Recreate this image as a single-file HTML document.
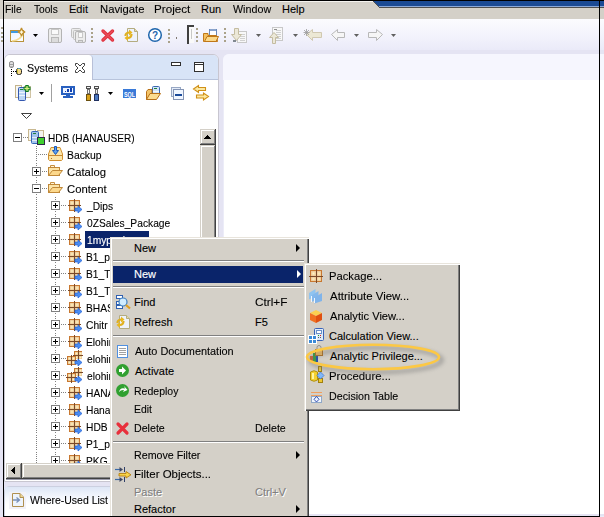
<!DOCTYPE html>
<html><head><meta charset="utf-8"><style>
html,body{margin:0;padding:0;width:604px;height:517px;overflow:hidden;position:relative;background:#e5e4f3;font-family:'Liberation Sans', sans-serif}
</style></head><body>
<div style="position:absolute;left:0px;top:0px;width:604px;height:19px;background:#d4d0c8"></div>
<div style="position:absolute;left:4px;top:1px;width:595px;height:1px;background:#f4f2ee"></div>
<svg style="position:absolute;left:0;top:0" width="604" height="9" shape-rendering="crispEdges"><polygon points="371,0 604,0 604,8 379,8" fill="#505050"/><polygon points="372,0 604,0 604,7 379,7" fill="#8aa8d8"/><polygon points="372,0 604,0 604,6 378,6" fill="#1a4a94"/></svg>
<div style="position:absolute;left:0px;top:19px;width:604px;height:31px;background:linear-gradient(#fbfbfe,#f3f3fc 55%,#eaeaf8)"></div>
<div style="position:absolute;left:0px;top:50px;width:604px;height:467px;background:#e5e4f3"></div>
<svg style="position:absolute;left:0;top:0" width="604" height="517" shape-rendering="crispEdges"><rect x="1" y="27" width="2" height="2" fill="#a8a48e" /><rect x="1" y="32" width="2" height="2" fill="#a8a48e" /><rect x="1" y="36" width="2" height="2" fill="#a8a48e" /><rect x="1" y="40" width="2" height="2" fill="#a8a48e" /></svg>
<div style="position:absolute;left:5.06px;top:-1px;font:11px/20px 'Liberation Sans', sans-serif;white-space:pre;color:#000;-webkit-text-stroke:0.1px #000;transform:scaleX(0.9375);transform-origin:0 0;">File</div>
<div style="position:absolute;left:34.00px;top:-1px;font:11px/20px 'Liberation Sans', sans-serif;white-space:pre;color:#000;-webkit-text-stroke:0.1px #000;transform:scaleX(0.9231);transform-origin:0 0;">Tools</div>
<div style="position:absolute;left:69.00px;top:-1px;font:11px/20px 'Liberation Sans', sans-serif;white-space:pre;color:#000;-webkit-text-stroke:0.1px #000;">Edit</div>
<div style="position:absolute;left:99.98px;top:-1px;font:11px/20px 'Liberation Sans', sans-serif;white-space:pre;color:#000;-webkit-text-stroke:0.1px #000;transform:scaleX(1.0238);transform-origin:0 0;">Navigate</div>
<div style="position:absolute;left:153.94px;top:-1px;font:11px/20px 'Liberation Sans', sans-serif;white-space:pre;color:#000;-webkit-text-stroke:0.1px #000;transform:scaleX(1.0606);transform-origin:0 0;">Project</div>
<div style="position:absolute;left:201.00px;top:-1px;font:11px/20px 'Liberation Sans', sans-serif;white-space:pre;color:#000;-webkit-text-stroke:0.1px #000;">Run</div>
<div style="position:absolute;left:233.00px;top:-1px;font:11px/20px 'Liberation Sans', sans-serif;white-space:pre;color:#000;-webkit-text-stroke:0.1px #000;transform:scaleX(0.9744);transform-origin:0 0;">Window</div>
<div style="position:absolute;left:282.00px;top:-1px;font:11px/20px 'Liberation Sans', sans-serif;white-space:pre;color:#000;-webkit-text-stroke:0.1px #000;">Help</div>
<svg style="position:absolute;left:0;top:0" width="604" height="517"><defs><linearGradient id="gwin" x1="0" y1="0" x2="1" y2="1"><stop offset="0" stop-color="#e8f4ff"/><stop offset="1" stop-color="#ffffff"/></linearGradient></defs><rect x="10.5" y="30.5" width="13" height="11" fill="url(#gwin)" stroke="#b8923a"/><rect x="11" y="31" width="10" height="2" fill="#3d9ae0" /><path d="M12 41 Q21 40 22.5 34" stroke="#f4dc90" stroke-width="1.6" fill="none"/><path d="M21.5 27.8 Q22 31.3 25.2 32 Q22 32.7 21.5 36.2 Q21 32.7 17.8 32 Q21 31.3 21.5 27.8 Z" fill="#fffbe0" stroke="#c09030" stroke-width="1.2"/><polygon points="33,34 38,34 35.5,37" fill="#000"/><rect x="48.5" y="28.5" width="13" height="14" rx="1.5" fill="#ececec" stroke="#b4b4b4"/><rect x="51.5" y="29.5" width="7" height="5" fill="#fafafa" stroke="#c8c8c8"/><rect x="51.5" y="37.5" width="7" height="5" fill="#dcdcdc" stroke="#b8b8b8"/><rect x="71.5" y="28.5" width="9" height="9" rx="1" fill="#ececec" stroke="#c0c0c0"/><rect x="73.5" y="30.5" width="9" height="9" rx="1" fill="#ececec" stroke="#c0c0c0"/><rect x="75.5" y="31.5" width="10" height="11" rx="1.5" fill="#ececec" stroke="#b4b4b4"/><rect x="78.5" y="32.5" width="4" height="5" fill="#fafafa" stroke="#c8c8c8"/><rect x="78.5" y="40.5" width="4" height="2" fill="#dcdcdc" stroke="#b8b8b8"/><rect x="91" y="28" width="2" height="2" fill="#aaa28a" /><rect x="91" y="32" width="2" height="2" fill="#aaa28a" /><rect x="91" y="36" width="2" height="2" fill="#aaa28a" /><rect x="91" y="40" width="2" height="2" fill="#aaa28a" /><path d="M103 31 L112.5 40 M112.5 31 L103 40" stroke="#e0303c" stroke-width="3.4" stroke-linecap="round"/><path d="M103 31 L112.5 40 M112.5 31 L103 40" stroke="#f06070" stroke-width="1.2" stroke-linecap="round" opacity=".6"/><path d="M127.5 28.5 H134.5 L137.5 31.5 V41.5 H127.5 Z" fill="#edf2fc" stroke="#b4ac80"/><path d="M134.5 28.5 V31.5 H137.5" fill="#e8dca8" stroke="#b4ac80"/><path d="M125.5 36 Q125.5 32.5 129.5 32.5" stroke="#e0b020" stroke-width="2.2" fill="none"/><path d="M129 29.5 L132.5 32.5 L129 35.5 Z" fill="#e8b820"/><path d="M131.5 34 Q131.5 38 127.5 38" stroke="#e0b020" stroke-width="2.2" fill="none"/><path d="M128 35 L124.5 38 L128 41 Z" fill="#e8b820"/><circle cx="155" cy="35" r="6.3" fill="#fff" stroke="#1f66ad" stroke-width="1.5"/><text x="155" y="39" font-family="Liberation Sans" font-weight="bold" font-size="10" text-anchor="middle" fill="#1f66ad">?</text><rect x="168" y="29" width="2" height="2" fill="#aaa28a" /><rect x="168" y="33" width="2" height="2" fill="#aaa28a" /><rect x="168" y="37" width="2" height="2" fill="#aaa28a" /><rect x="168" y="41" width="2" height="2" fill="#aaa28a" /><rect x="176" y="37" width="1" height="2" fill="#807870" /><rect x="187" y="25" width="2" height="19" fill="#404040" /><rect x="187" y="25" width="7" height="2" fill="#404040" /><rect x="189" y="27" width="5" height="16" fill="#fafafa" /><rect x="191" y="29" width="1" height="10" fill="#c8c8c8" /><rect x="196" y="28" width="2" height="2" fill="#aaa28a" /><rect x="196" y="32" width="2" height="2" fill="#aaa28a" /><rect x="196" y="36" width="2" height="2" fill="#aaa28a" /><rect x="196" y="40" width="2" height="2" fill="#aaa28a" /><rect x="209.5" y="29.5" width="7" height="7" fill="#fff" stroke="#6b8ab8"/><rect x="210" y="29" width="6" height="2" fill="#8aa4cc" /><path d="M203.5 33.5 H208 V35.5 H216.5 L217.5 41.5 H203.5 Z" fill="#f4c060" stroke="#c07818"/><path d="M204.5 41.5 L207 36.5 H218.5 L216 41.5 Z" fill="#fbd98a" stroke="#c07818"/><rect x="224" y="28" width="2" height="2" fill="#aaa28a" /><rect x="224" y="32" width="2" height="2" fill="#aaa28a" /><rect x="224" y="36" width="2" height="2" fill="#aaa28a" /><rect x="224" y="40" width="2" height="2" fill="#aaa28a" /><rect x="237.5" y="31.5" width="9" height="11" fill="#f8f8f8" stroke="#c8c8c8"/><rect x="240" y="34" width="5" height="1" fill="#d0d0d0" /><rect x="240" y="36" width="5" height="1" fill="#d0d0d0" /><rect x="240" y="38" width="5" height="1" fill="#d0d0d0" /><rect x="240" y="40" width="5" height="1" fill="#d0d0d0" /><path d="M234.5 28.5 H238.5 V34.5 H241.5 L236.5 40.5 L231.5 34.5 H234.5 Z" fill="#ece8d8" stroke="#c4bca0"/><rect x="233" y="40" width="3" height="2" fill="#808890" /><polygon points="256,34 261,34 258.5,37" fill="#606060"/><rect x="272.5" y="27.5" width="10" height="13" fill="#f8f8f8" stroke="#c8c8c8"/><rect x="276" y="30" width="5" height="1" fill="#d0d0d0" /><rect x="276" y="32" width="5" height="1" fill="#d0d0d0" /><rect x="276" y="34" width="5" height="1" fill="#d0d0d0" /><rect x="276" y="36" width="5" height="1" fill="#d0d0d0" /><rect x="276" y="38" width="5" height="1" fill="#d0d0d0" /><rect x="274" y="29" width="3" height="1" fill="#909090" /><path d="M272.5 43.5 V37.5 H269.5 L274 32.5 L278.5 37.5 H275.5 V43.5 Z" fill="#ece8d8" stroke="#c4bca0"/><polygon points="293,34 298,34 295.5,37" fill="#606060"/><path d="M306.5 34.5 L312.5 29.5 V32.5 H321.5 V37.5 H312.5 V40.5 Z" fill="#ece8d4" stroke="#d0c8b0"/><path d="M304 30 L309 35 M309 30 L304 35 M306.5 29 V36 M303.5 32.5 H309.5" stroke="#9a9a9a" stroke-width=".8"/><path d="M331.5 34.5 L337.5 29.5 V32.5 H344.5 V37.5 H337.5 V40.5 Z" fill="#f6f6f6" stroke="#b8b8b8"/><polygon points="354,34 359,34 356.5,37" fill="#606060"/><path d="M382.5 34.5 L376.5 29.5 V32.5 H368.5 V37.5 H376.5 V40.5 Z" fill="#f6f6f6" stroke="#b8b8b8"/><polygon points="391,34 396,34 393.5,37" fill="#606060"/></svg>
<div style="position:absolute;left:4px;top:54px;width:215px;height:428px;background:#fff;border:1px solid #c8c6d0;border-radius:6px 6px 0 0;box-sizing:border-box"></div>
<div style="position:absolute;left:5px;top:55px;width:213px;height:24px;background:#d8e4f7;border-radius:5px 5px 0 0"></div>
<div style="position:absolute;left:5px;top:79px;width:213px;height:1px;background:#b8c4dc"></div>
<div style="position:absolute;left:5px;top:55px;width:88px;height:25px;background:#fff;border-right:1px solid #b8c0d8;border-radius:5px 4px 0 0;box-sizing:border-box"></div>
<div style="position:absolute;left:27.02px;top:58px;font:11px/20px 'Liberation Sans', sans-serif;white-space:pre;color:#000;-webkit-text-stroke:0.1px #000;transform:scaleX(0.9756);transform-origin:0 0;">Systems</div>
<svg style="position:absolute;left:0;top:0" width="604" height="517"><rect x="9.5" y="61.5" width="4" height="6" rx="1.5" fill="#e0e0e0" stroke="#909090"/><rect x="10" y="64" width="3" height="1" fill="#a0a0a0" /><rect x="10" y="66" width="3" height="1" fill="#b0b0b0" /><rect x="11" y="69" width="1" height="1" fill="#000" /><rect x="11" y="71" width="1" height="1" fill="#000" /><rect x="11" y="73" width="1" height="1" fill="#000" /><rect x="11" y="75" width="1" height="1" fill="#000" /><rect x="13" y="71" width="1" height="1" fill="#000" /><rect x="15" y="71" width="1" height="1" fill="#000" /><rect x="16.5" y="68.5" width="5" height="6" rx="2" fill="#f8dc90" stroke="#202020"/><rect x="17" y="69" width="1" height="4" fill="#c8c030" /><rect x="18" y="68" width="3" height="1" fill="#50a0b0" /><path d="M75.5 63.5 L77.5 63.5 L80 66 L82.5 63.5 L84.5 63.5 L84.5 65.5 L82 68 L84.5 70.5 L84.5 72.5 L82.5 72.5 L80 70 L77.5 72.5 L75.5 72.5 L75.5 70.5 L78 68 L75.5 65.5 Z" fill="#fff" stroke="#404040"/><rect x="171.5" y="62.5" width="9" height="3" fill="#fff" stroke="#303030"/><rect x="194.5" y="62.5" width="9" height="9" fill="#fff" stroke="#303030"/><rect x="195" y="64" width="9" height="1" fill="#303030" /><rect x="15.5" y="85.5" width="6" height="12" fill="#f6f6f2" stroke="#c4b48c"/><rect x="24.5" y="86.5" width="6" height="11" fill="#f6f6f2" stroke="#d0c4a4"/><rect x="18.5" y="87.5" width="7" height="13" rx="1" fill="#bcd6f6" stroke="#3458b0"/><rect x="20" y="89" width="3" height="1" fill="#208040" /><rect x="19" y="92" width="6" height="1" fill="#eef4fc" /><rect x="19" y="95" width="6" height="1" fill="#eef4fc" /><path d="M23.5 88.5 H30.5 M27 85 V92" stroke="#0a7a20" stroke-width="3.4"/><path d="M24.5 88.5 H29.5 M27 86 V91" stroke="#d8f080" stroke-width="1.3"/><polygon points="39,92 44,92 41.5,95" fill="#000"/><rect x="51" y="84" width="1" height="18" fill="#a0a0a0" /><rect x="62" y="87" width="12" height="7" fill="#eef4ff" stroke="#2860c0" stroke-width="2"/><rect x="65" y="91" width="1" height="1" fill="#1040b0" /><rect x="67" y="89" width="2" height="3" fill="#1040b0" /><rect x="70" y="88" width="2" height="4" fill="#1040b0" /><rect x="66" y="95" width="4" height="1" fill="#2860c0" /><rect x="63" y="96" width="10" height="2" fill="#2860c0" /><rect x="86.5" y="86.5" width="4" height="2" fill="#f0f0f0" stroke="#505050"/><rect x="87.5" y="89.5" width="2" height="4" fill="#f4f4f4" stroke="#707070"/><rect x="86.5" y="94.5" width="4" height="6" fill="#d8a018" stroke="#6a5010"/><rect x="94.5" y="86.5" width="4" height="2" fill="#f0f0f0" stroke="#505050"/><rect x="95.5" y="89.5" width="2" height="4" fill="#f4f4f4" stroke="#707070"/><rect x="94.5" y="94.5" width="4" height="6" fill="#4a78c0" stroke="#203060"/><polygon points="108,92 113,92 110.5,95" fill="#000"/><rect x="123" y="89" width="13" height="9" fill="#3a7ad8" /><text x="129.5" y="96.5" font-family="Liberation Sans" font-weight="bold" font-size="7.5" text-anchor="middle" fill="#fff" textLength="11" lengthAdjust="spacingAndGlyphs">SQL</text><rect x="152.5" y="86.5" width="7" height="8" rx="1" fill="#d0e4f8" stroke="#3a68b0"/><rect x="154" y="88" width="3" height="1" fill="#208040" /><rect x="153" y="91" width="6" height="1" fill="#f4f8fc" /><path d="M146.5 91.5 L148 89.5 H152 V99.5 H146.5 Z" fill="#f4c468" stroke="#b87018"/><path d="M146.5 99.5 L150 93.5 H160.5 L156.5 99.5 Z" fill="#fcdc90" stroke="#b87018"/><rect x="171.5" y="87.5" width="9" height="9" fill="#e4ecf8" stroke="#98a8c4"/><rect x="173.5" y="89.5" width="10" height="10" fill="#f0f6ff" stroke="#8494b4"/><rect x="175" y="94" width="7" height="2" fill="#1a4a9a" /><path d="M193.5 89 L198.5 85.5 V87.5 H205.5 V90.5 H198.5 V92.5 Z" fill="#fce8a0" stroke="#d09018" stroke-width="1.1"/><path d="M208.5 96.5 L203.5 93 V95 H196.5 V98 H203.5 V100 Z" fill="#fce8a0" stroke="#d09018" stroke-width="1.1"/><path d="M21.5 113.5 H31.5 L26.5 118.5 Z" fill="#fff" stroke="#404040"/></svg>
<div style="position:absolute;left:223px;top:54px;width:381px;height:463px;background:#fff;border:1px solid #ececf8;border-right:0;border-radius:6px 0 0 0;box-sizing:border-box"></div>
<div style="position:absolute;left:223px;top:54px;width:381px;height:26px;background:#f6f6fe;border-radius:6px 0 0 0"></div>
<div style="position:absolute;left:224px;top:514px;width:380px;height:2px;background:#e5e4f3"></div>
<div style="position:absolute;left:4px;top:486px;width:215px;height:31px;background:#fff;border:1px solid #ccd0e0;border-radius:6px 6px 0 0;box-sizing:border-box"></div>
<div style="position:absolute;left:5px;top:487px;width:213px;height:29px;background:linear-gradient(#dde6f6,#f4f7fd 35%,#fff 60%)"></div>
<div style="position:absolute;left:30.00px;top:490px;font:11px/20px 'Liberation Sans', sans-serif;white-space:pre;color:#000;-webkit-text-stroke:0.1px #000;transform:scaleX(0.9512);transform-origin:0 0;">Where-Used List</div>
<svg style="position:absolute;left:0;top:0" width="604" height="517"><rect x="9" y="492" width="17" height="17" fill="#f2f2f8"/><path d="M12.5 493.5 H20 L23.5 497 V506.5 H12.5 Z" fill="#eef4fc" stroke="#b09050"/><path d="M20 493.5 V497.5 H23.5" fill="#f0d890" stroke="#b09050"/><path d="M13 500 H19 M16.5 497.5 L19.5 500 L16.5 502.5" stroke="#7890b8" stroke-width="1.3" fill="none"/></svg>
<svg style="position:absolute;left:0;top:0" width="604" height="517"><defs><radialGradient id="cell"><stop offset="0" stop-color="#fff4c0"/><stop offset="1" stop-color="#ecc898"/></radialGradient></defs><rect x="36" y="146" width="1" height="1" fill="#808080" /><rect x="36" y="148" width="1" height="1" fill="#808080" /><rect x="36" y="150" width="1" height="1" fill="#808080" /><rect x="36" y="152" width="1" height="1" fill="#808080" /><rect x="36" y="154" width="1" height="1" fill="#808080" /><rect x="36" y="156" width="1" height="1" fill="#808080" /><rect x="36" y="158" width="1" height="1" fill="#808080" /><rect x="36" y="160" width="1" height="1" fill="#808080" /><rect x="36" y="163" width="1" height="1" fill="#808080" /><rect x="36" y="165" width="1" height="1" fill="#808080" /><rect x="36" y="167" width="1" height="1" fill="#808080" /><rect x="36" y="169" width="1" height="1" fill="#808080" /><rect x="36" y="171" width="1" height="1" fill="#808080" /><rect x="36" y="173" width="1" height="1" fill="#808080" /><rect x="36" y="175" width="1" height="1" fill="#808080" /><rect x="36" y="177" width="1" height="1" fill="#808080" /><rect x="36" y="180" width="1" height="1" fill="#808080" /><rect x="36" y="182" width="1" height="1" fill="#808080" /><rect x="36" y="184" width="1" height="1" fill="#808080" /><rect x="36" y="186" width="1" height="1" fill="#808080" /><rect x="36" y="188" width="1" height="1" fill="#808080" /><rect x="36" y="190" width="1" height="1" fill="#808080" /><rect x="36" y="192" width="1" height="1" fill="#808080" /><rect x="36" y="194" width="1" height="1" fill="#808080" /><rect x="36" y="197" width="1" height="1" fill="#808080" /><rect x="55" y="197" width="1" height="1" fill="#808080" /><rect x="36" y="199" width="1" height="1" fill="#808080" /><rect x="55" y="199" width="1" height="1" fill="#808080" /><rect x="36" y="201" width="1" height="1" fill="#808080" /><rect x="55" y="201" width="1" height="1" fill="#808080" /><rect x="36" y="203" width="1" height="1" fill="#808080" /><rect x="55" y="203" width="1" height="1" fill="#808080" /><rect x="36" y="205" width="1" height="1" fill="#808080" /><rect x="55" y="205" width="1" height="1" fill="#808080" /><rect x="36" y="207" width="1" height="1" fill="#808080" /><rect x="55" y="207" width="1" height="1" fill="#808080" /><rect x="36" y="209" width="1" height="1" fill="#808080" /><rect x="55" y="209" width="1" height="1" fill="#808080" /><rect x="36" y="211" width="1" height="1" fill="#808080" /><rect x="55" y="211" width="1" height="1" fill="#808080" /><rect x="36" y="214" width="1" height="1" fill="#808080" /><rect x="55" y="214" width="1" height="1" fill="#808080" /><rect x="36" y="216" width="1" height="1" fill="#808080" /><rect x="55" y="216" width="1" height="1" fill="#808080" /><rect x="36" y="218" width="1" height="1" fill="#808080" /><rect x="55" y="218" width="1" height="1" fill="#808080" /><rect x="36" y="220" width="1" height="1" fill="#808080" /><rect x="55" y="220" width="1" height="1" fill="#808080" /><rect x="36" y="222" width="1" height="1" fill="#808080" /><rect x="55" y="222" width="1" height="1" fill="#808080" /><rect x="36" y="224" width="1" height="1" fill="#808080" /><rect x="55" y="224" width="1" height="1" fill="#808080" /><rect x="36" y="226" width="1" height="1" fill="#808080" /><rect x="55" y="226" width="1" height="1" fill="#808080" /><rect x="36" y="228" width="1" height="1" fill="#808080" /><rect x="55" y="228" width="1" height="1" fill="#808080" /><rect x="36" y="231" width="1" height="1" fill="#808080" /><rect x="55" y="231" width="1" height="1" fill="#808080" /><rect x="36" y="233" width="1" height="1" fill="#808080" /><rect x="55" y="233" width="1" height="1" fill="#808080" /><rect x="36" y="235" width="1" height="1" fill="#808080" /><rect x="55" y="235" width="1" height="1" fill="#808080" /><rect x="36" y="237" width="1" height="1" fill="#808080" /><rect x="55" y="237" width="1" height="1" fill="#808080" /><rect x="36" y="239" width="1" height="1" fill="#808080" /><rect x="55" y="239" width="1" height="1" fill="#808080" /><rect x="36" y="241" width="1" height="1" fill="#808080" /><rect x="55" y="241" width="1" height="1" fill="#808080" /><rect x="36" y="243" width="1" height="1" fill="#808080" /><rect x="55" y="243" width="1" height="1" fill="#808080" /><rect x="36" y="245" width="1" height="1" fill="#808080" /><rect x="55" y="245" width="1" height="1" fill="#808080" /><rect x="36" y="248" width="1" height="1" fill="#808080" /><rect x="55" y="248" width="1" height="1" fill="#808080" /><rect x="36" y="250" width="1" height="1" fill="#808080" /><rect x="55" y="250" width="1" height="1" fill="#808080" /><rect x="36" y="252" width="1" height="1" fill="#808080" /><rect x="55" y="252" width="1" height="1" fill="#808080" /><rect x="36" y="254" width="1" height="1" fill="#808080" /><rect x="55" y="254" width="1" height="1" fill="#808080" /><rect x="36" y="256" width="1" height="1" fill="#808080" /><rect x="55" y="256" width="1" height="1" fill="#808080" /><rect x="36" y="258" width="1" height="1" fill="#808080" /><rect x="55" y="258" width="1" height="1" fill="#808080" /><rect x="36" y="260" width="1" height="1" fill="#808080" /><rect x="55" y="260" width="1" height="1" fill="#808080" /><rect x="36" y="262" width="1" height="1" fill="#808080" /><rect x="55" y="262" width="1" height="1" fill="#808080" /><rect x="36" y="265" width="1" height="1" fill="#808080" /><rect x="55" y="265" width="1" height="1" fill="#808080" /><rect x="36" y="267" width="1" height="1" fill="#808080" /><rect x="55" y="267" width="1" height="1" fill="#808080" /><rect x="36" y="269" width="1" height="1" fill="#808080" /><rect x="55" y="269" width="1" height="1" fill="#808080" /><rect x="36" y="271" width="1" height="1" fill="#808080" /><rect x="55" y="271" width="1" height="1" fill="#808080" /><rect x="36" y="273" width="1" height="1" fill="#808080" /><rect x="55" y="273" width="1" height="1" fill="#808080" /><rect x="36" y="275" width="1" height="1" fill="#808080" /><rect x="55" y="275" width="1" height="1" fill="#808080" /><rect x="36" y="277" width="1" height="1" fill="#808080" /><rect x="55" y="277" width="1" height="1" fill="#808080" /><rect x="36" y="279" width="1" height="1" fill="#808080" /><rect x="55" y="279" width="1" height="1" fill="#808080" /><rect x="36" y="282" width="1" height="1" fill="#808080" /><rect x="55" y="282" width="1" height="1" fill="#808080" /><rect x="36" y="284" width="1" height="1" fill="#808080" /><rect x="55" y="284" width="1" height="1" fill="#808080" /><rect x="36" y="286" width="1" height="1" fill="#808080" /><rect x="55" y="286" width="1" height="1" fill="#808080" /><rect x="36" y="288" width="1" height="1" fill="#808080" /><rect x="55" y="288" width="1" height="1" fill="#808080" /><rect x="36" y="290" width="1" height="1" fill="#808080" /><rect x="55" y="290" width="1" height="1" fill="#808080" /><rect x="36" y="292" width="1" height="1" fill="#808080" /><rect x="55" y="292" width="1" height="1" fill="#808080" /><rect x="36" y="294" width="1" height="1" fill="#808080" /><rect x="55" y="294" width="1" height="1" fill="#808080" /><rect x="36" y="296" width="1" height="1" fill="#808080" /><rect x="55" y="296" width="1" height="1" fill="#808080" /><rect x="36" y="299" width="1" height="1" fill="#808080" /><rect x="55" y="299" width="1" height="1" fill="#808080" /><rect x="36" y="301" width="1" height="1" fill="#808080" /><rect x="55" y="301" width="1" height="1" fill="#808080" /><rect x="36" y="303" width="1" height="1" fill="#808080" /><rect x="55" y="303" width="1" height="1" fill="#808080" /><rect x="36" y="305" width="1" height="1" fill="#808080" /><rect x="55" y="305" width="1" height="1" fill="#808080" /><rect x="36" y="307" width="1" height="1" fill="#808080" /><rect x="55" y="307" width="1" height="1" fill="#808080" /><rect x="36" y="309" width="1" height="1" fill="#808080" /><rect x="55" y="309" width="1" height="1" fill="#808080" /><rect x="36" y="311" width="1" height="1" fill="#808080" /><rect x="55" y="311" width="1" height="1" fill="#808080" /><rect x="36" y="313" width="1" height="1" fill="#808080" /><rect x="55" y="313" width="1" height="1" fill="#808080" /><rect x="36" y="316" width="1" height="1" fill="#808080" /><rect x="55" y="316" width="1" height="1" fill="#808080" /><rect x="36" y="318" width="1" height="1" fill="#808080" /><rect x="55" y="318" width="1" height="1" fill="#808080" /><rect x="36" y="320" width="1" height="1" fill="#808080" /><rect x="55" y="320" width="1" height="1" fill="#808080" /><rect x="36" y="322" width="1" height="1" fill="#808080" /><rect x="55" y="322" width="1" height="1" fill="#808080" /><rect x="36" y="324" width="1" height="1" fill="#808080" /><rect x="55" y="324" width="1" height="1" fill="#808080" /><rect x="36" y="326" width="1" height="1" fill="#808080" /><rect x="55" y="326" width="1" height="1" fill="#808080" /><rect x="36" y="328" width="1" height="1" fill="#808080" /><rect x="55" y="328" width="1" height="1" fill="#808080" /><rect x="36" y="330" width="1" height="1" fill="#808080" /><rect x="55" y="330" width="1" height="1" fill="#808080" /><rect x="36" y="333" width="1" height="1" fill="#808080" /><rect x="55" y="333" width="1" height="1" fill="#808080" /><rect x="36" y="335" width="1" height="1" fill="#808080" /><rect x="55" y="335" width="1" height="1" fill="#808080" /><rect x="36" y="337" width="1" height="1" fill="#808080" /><rect x="55" y="337" width="1" height="1" fill="#808080" /><rect x="36" y="339" width="1" height="1" fill="#808080" /><rect x="55" y="339" width="1" height="1" fill="#808080" /><rect x="36" y="341" width="1" height="1" fill="#808080" /><rect x="55" y="341" width="1" height="1" fill="#808080" /><rect x="36" y="343" width="1" height="1" fill="#808080" /><rect x="55" y="343" width="1" height="1" fill="#808080" /><rect x="36" y="345" width="1" height="1" fill="#808080" /><rect x="55" y="345" width="1" height="1" fill="#808080" /><rect x="36" y="347" width="1" height="1" fill="#808080" /><rect x="55" y="347" width="1" height="1" fill="#808080" /><rect x="36" y="350" width="1" height="1" fill="#808080" /><rect x="55" y="350" width="1" height="1" fill="#808080" /><rect x="36" y="352" width="1" height="1" fill="#808080" /><rect x="55" y="352" width="1" height="1" fill="#808080" /><rect x="36" y="354" width="1" height="1" fill="#808080" /><rect x="55" y="354" width="1" height="1" fill="#808080" /><rect x="36" y="356" width="1" height="1" fill="#808080" /><rect x="55" y="356" width="1" height="1" fill="#808080" /><rect x="36" y="358" width="1" height="1" fill="#808080" /><rect x="55" y="358" width="1" height="1" fill="#808080" /><rect x="36" y="360" width="1" height="1" fill="#808080" /><rect x="55" y="360" width="1" height="1" fill="#808080" /><rect x="36" y="362" width="1" height="1" fill="#808080" /><rect x="55" y="362" width="1" height="1" fill="#808080" /><rect x="36" y="364" width="1" height="1" fill="#808080" /><rect x="55" y="364" width="1" height="1" fill="#808080" /><rect x="36" y="367" width="1" height="1" fill="#808080" /><rect x="55" y="367" width="1" height="1" fill="#808080" /><rect x="36" y="369" width="1" height="1" fill="#808080" /><rect x="55" y="369" width="1" height="1" fill="#808080" /><rect x="36" y="371" width="1" height="1" fill="#808080" /><rect x="55" y="371" width="1" height="1" fill="#808080" /><rect x="36" y="373" width="1" height="1" fill="#808080" /><rect x="55" y="373" width="1" height="1" fill="#808080" /><rect x="36" y="375" width="1" height="1" fill="#808080" /><rect x="55" y="375" width="1" height="1" fill="#808080" /><rect x="36" y="377" width="1" height="1" fill="#808080" /><rect x="55" y="377" width="1" height="1" fill="#808080" /><rect x="36" y="379" width="1" height="1" fill="#808080" /><rect x="55" y="379" width="1" height="1" fill="#808080" /><rect x="36" y="381" width="1" height="1" fill="#808080" /><rect x="55" y="381" width="1" height="1" fill="#808080" /><rect x="36" y="384" width="1" height="1" fill="#808080" /><rect x="55" y="384" width="1" height="1" fill="#808080" /><rect x="36" y="386" width="1" height="1" fill="#808080" /><rect x="55" y="386" width="1" height="1" fill="#808080" /><rect x="36" y="388" width="1" height="1" fill="#808080" /><rect x="55" y="388" width="1" height="1" fill="#808080" /><rect x="36" y="390" width="1" height="1" fill="#808080" /><rect x="55" y="390" width="1" height="1" fill="#808080" /><rect x="36" y="392" width="1" height="1" fill="#808080" /><rect x="55" y="392" width="1" height="1" fill="#808080" /><rect x="36" y="394" width="1" height="1" fill="#808080" /><rect x="55" y="394" width="1" height="1" fill="#808080" /><rect x="36" y="396" width="1" height="1" fill="#808080" /><rect x="55" y="396" width="1" height="1" fill="#808080" /><rect x="36" y="398" width="1" height="1" fill="#808080" /><rect x="55" y="398" width="1" height="1" fill="#808080" /><rect x="36" y="401" width="1" height="1" fill="#808080" /><rect x="55" y="401" width="1" height="1" fill="#808080" /><rect x="36" y="403" width="1" height="1" fill="#808080" /><rect x="55" y="403" width="1" height="1" fill="#808080" /><rect x="36" y="405" width="1" height="1" fill="#808080" /><rect x="55" y="405" width="1" height="1" fill="#808080" /><rect x="36" y="407" width="1" height="1" fill="#808080" /><rect x="55" y="407" width="1" height="1" fill="#808080" /><rect x="36" y="409" width="1" height="1" fill="#808080" /><rect x="55" y="409" width="1" height="1" fill="#808080" /><rect x="36" y="411" width="1" height="1" fill="#808080" /><rect x="55" y="411" width="1" height="1" fill="#808080" /><rect x="36" y="413" width="1" height="1" fill="#808080" /><rect x="55" y="413" width="1" height="1" fill="#808080" /><rect x="36" y="415" width="1" height="1" fill="#808080" /><rect x="55" y="415" width="1" height="1" fill="#808080" /><rect x="36" y="418" width="1" height="1" fill="#808080" /><rect x="55" y="418" width="1" height="1" fill="#808080" /><rect x="36" y="420" width="1" height="1" fill="#808080" /><rect x="55" y="420" width="1" height="1" fill="#808080" /><rect x="36" y="422" width="1" height="1" fill="#808080" /><rect x="55" y="422" width="1" height="1" fill="#808080" /><rect x="36" y="424" width="1" height="1" fill="#808080" /><rect x="55" y="424" width="1" height="1" fill="#808080" /><rect x="36" y="426" width="1" height="1" fill="#808080" /><rect x="55" y="426" width="1" height="1" fill="#808080" /><rect x="36" y="428" width="1" height="1" fill="#808080" /><rect x="55" y="428" width="1" height="1" fill="#808080" /><rect x="36" y="430" width="1" height="1" fill="#808080" /><rect x="55" y="430" width="1" height="1" fill="#808080" /><rect x="36" y="432" width="1" height="1" fill="#808080" /><rect x="55" y="432" width="1" height="1" fill="#808080" /><rect x="36" y="435" width="1" height="1" fill="#808080" /><rect x="55" y="435" width="1" height="1" fill="#808080" /><rect x="36" y="437" width="1" height="1" fill="#808080" /><rect x="55" y="437" width="1" height="1" fill="#808080" /><rect x="36" y="439" width="1" height="1" fill="#808080" /><rect x="55" y="439" width="1" height="1" fill="#808080" /><rect x="36" y="441" width="1" height="1" fill="#808080" /><rect x="55" y="441" width="1" height="1" fill="#808080" /><rect x="36" y="443" width="1" height="1" fill="#808080" /><rect x="55" y="443" width="1" height="1" fill="#808080" /><rect x="36" y="445" width="1" height="1" fill="#808080" /><rect x="55" y="445" width="1" height="1" fill="#808080" /><rect x="36" y="447" width="1" height="1" fill="#808080" /><rect x="55" y="447" width="1" height="1" fill="#808080" /><rect x="36" y="449" width="1" height="1" fill="#808080" /><rect x="55" y="449" width="1" height="1" fill="#808080" /><rect x="36" y="452" width="1" height="1" fill="#808080" /><rect x="55" y="452" width="1" height="1" fill="#808080" /><rect x="36" y="454" width="1" height="1" fill="#808080" /><rect x="55" y="454" width="1" height="1" fill="#808080" /><rect x="36" y="456" width="1" height="1" fill="#808080" /><rect x="55" y="456" width="1" height="1" fill="#808080" /><rect x="36" y="458" width="1" height="1" fill="#808080" /><rect x="55" y="458" width="1" height="1" fill="#808080" /><rect x="36" y="460" width="1" height="1" fill="#808080" /><rect x="55" y="460" width="1" height="1" fill="#808080" /><rect x="36" y="462" width="1" height="1" fill="#808080" /><rect x="55" y="462" width="1" height="1" fill="#808080" /><rect x="13" y="133" width="9" height="9" fill="#808080" /><rect x="14" y="134" width="7" height="7" fill="#fff" /><rect x="15" y="137" width="5" height="1" fill="#000" /><rect x="23" y="137" width="1" height="1" fill="#808080" /><rect x="25" y="137" width="1" height="1" fill="#808080" /><rect x="27" y="137" width="1" height="1" fill="#808080" /><rect x="28.5" y="129.5" width="7" height="11" fill="#f4f4f0" stroke="#c8b890"/><rect x="37.5" y="130.5" width="6" height="8" fill="#f4f4f0" stroke="#c8b890"/><rect x="31.5" y="131.5" width="7" height="12" rx="1" fill="#a4c4ec" stroke="#3466b8"/><rect x="33" y="133" width="3" height="1" fill="#208040" /><rect x="32" y="137" width="6" height="1" fill="#e0ecf8" /><rect x="32" y="140" width="6" height="1" fill="#e0ecf8" /><rect x="37.5" y="137.5" width="7" height="7" fill="#40d030" stroke="#302848"/><rect x="38" y="154" width="1" height="1" fill="#808080" /><rect x="40" y="154" width="1" height="1" fill="#808080" /><rect x="42" y="154" width="1" height="1" fill="#808080" /><rect x="44" y="154" width="1" height="1" fill="#808080" /><rect x="46" y="154" width="1" height="1" fill="#808080" /><path d="M51 147.5 H60 L62.5 154 V159.5 L61.5 160.5 H49.5 L48.5 159.5 V154 Z" fill="#fce6a8" stroke="#d09030"/><rect x="49" y="155" width="13" height="1" fill="#c88830" /><rect x="51" y="158" width="1" height="1" fill="#b87828" /><path d="M54.5 146.5 H56.5 V150.5 H58.5 L55.5 154.5 L52.5 150.5 H54.5 Z" fill="#5aa0f0" stroke="#1a58b8"/><rect x="32" y="167" width="9" height="9" fill="#808080" /><rect x="33" y="168" width="7" height="7" fill="#fff" /><rect x="34" y="171" width="5" height="1" fill="#000" /><rect x="36" y="169" width="1" height="5" fill="#000" /><rect x="42" y="171" width="1" height="1" fill="#808080" /><rect x="44" y="171" width="1" height="1" fill="#808080" /><rect x="46" y="171" width="1" height="1" fill="#808080" /><path d="M50.5 168 V165.5 H54.5 V168" fill="#fff4d8" stroke="#c89040"/><rect x="48.5" y="167.5" width="11" height="8" fill="#fce4a8" stroke="#c08838"/><path d="M48.5 175.5 L52.5 170.5 H62.5 L58.5 175.5 Z" fill="#fcd88c" stroke="#c08838"/><rect x="32" y="184" width="9" height="9" fill="#808080" /><rect x="33" y="185" width="7" height="7" fill="#fff" /><rect x="34" y="188" width="5" height="1" fill="#000" /><rect x="42" y="188" width="1" height="1" fill="#808080" /><rect x="44" y="188" width="1" height="1" fill="#808080" /><rect x="46" y="188" width="1" height="1" fill="#808080" /><path d="M50.5 185 V182.5 H54.5 V185" fill="#fff4d8" stroke="#c89040"/><rect x="48.5" y="184.5" width="11" height="8" fill="#fce4a8" stroke="#c08838"/><path d="M48.5 192.5 L52.5 187.5 H62.5 L58.5 192.5 Z" fill="#fcd88c" stroke="#c08838"/><rect x="51" y="201" width="9" height="9" fill="#808080" /><rect x="52" y="202" width="7" height="7" fill="#fff" /><rect x="53" y="205" width="5" height="1" fill="#000" /><rect x="55" y="203" width="1" height="5" fill="#000" /><rect x="61" y="205" width="1" height="1" fill="#808080" /><rect x="63" y="205" width="1" height="1" fill="#808080" /><rect x="65" y="205" width="1" height="1" fill="#808080" /><rect x="69.5" y="200.5" width="10" height="10" fill="#ecd0a0" stroke="#c87830"/><rect x="70" y="201" width="4" height="4" fill="url(#cell)"/><rect x="75" y="201" width="4" height="4" fill="url(#cell)"/><rect x="70" y="206" width="4" height="4" fill="url(#cell)"/><rect x="75" y="206" width="4" height="4" fill="url(#cell)"/><rect x="68" y="205" width="13" height="1" fill="#7a4a28" /><rect x="74" y="199" width="1" height="13" fill="#7a4a28" /><path d="M75 208 H78 V206 L82 209.5 L78 213 V211 H75 Z" fill="#4a8cf0" stroke="#2262d8" stroke-width=".7"/><rect x="51" y="218" width="9" height="9" fill="#808080" /><rect x="52" y="219" width="7" height="7" fill="#fff" /><rect x="53" y="222" width="5" height="1" fill="#000" /><rect x="55" y="220" width="1" height="5" fill="#000" /><rect x="61" y="222" width="1" height="1" fill="#808080" /><rect x="63" y="222" width="1" height="1" fill="#808080" /><rect x="65" y="222" width="1" height="1" fill="#808080" /><rect x="69.5" y="217.5" width="10" height="10" fill="#ecd0a0" stroke="#c87830"/><rect x="70" y="218" width="4" height="4" fill="url(#cell)"/><rect x="75" y="218" width="4" height="4" fill="url(#cell)"/><rect x="70" y="223" width="4" height="4" fill="url(#cell)"/><rect x="75" y="223" width="4" height="4" fill="url(#cell)"/><rect x="68" y="222" width="13" height="1" fill="#7a4a28" /><rect x="74" y="216" width="1" height="13" fill="#7a4a28" /><path d="M75 225 H78 V223 L82 226.5 L78 230 V228 H75 Z" fill="#4a8cf0" stroke="#2262d8" stroke-width=".7"/><rect x="51" y="235" width="9" height="9" fill="#808080" /><rect x="52" y="236" width="7" height="7" fill="#fff" /><rect x="53" y="239" width="5" height="1" fill="#000" /><rect x="55" y="237" width="1" height="5" fill="#000" /><rect x="61" y="239" width="1" height="1" fill="#808080" /><rect x="63" y="239" width="1" height="1" fill="#808080" /><rect x="65" y="239" width="1" height="1" fill="#808080" /><rect x="69.5" y="234.5" width="10" height="10" fill="#ecd0a0" stroke="#c87830"/><rect x="70" y="235" width="4" height="4" fill="url(#cell)"/><rect x="75" y="235" width="4" height="4" fill="url(#cell)"/><rect x="70" y="240" width="4" height="4" fill="url(#cell)"/><rect x="75" y="240" width="4" height="4" fill="url(#cell)"/><rect x="68" y="239" width="13" height="1" fill="#7a4a28" /><rect x="74" y="233" width="1" height="13" fill="#7a4a28" /><path d="M75 242 H78 V240 L82 243.5 L78 247 V245 H75 Z" fill="#4a8cf0" stroke="#2262d8" stroke-width=".7"/><rect x="85" y="231" width="64" height="17" fill="#0a246a" /><rect x="51" y="252" width="9" height="9" fill="#808080" /><rect x="52" y="253" width="7" height="7" fill="#fff" /><rect x="53" y="256" width="5" height="1" fill="#000" /><rect x="55" y="254" width="1" height="5" fill="#000" /><rect x="61" y="256" width="1" height="1" fill="#808080" /><rect x="63" y="256" width="1" height="1" fill="#808080" /><rect x="65" y="256" width="1" height="1" fill="#808080" /><rect x="69.5" y="251.5" width="10" height="10" fill="#ecd0a0" stroke="#c87830"/><rect x="70" y="252" width="4" height="4" fill="url(#cell)"/><rect x="75" y="252" width="4" height="4" fill="url(#cell)"/><rect x="70" y="257" width="4" height="4" fill="url(#cell)"/><rect x="75" y="257" width="4" height="4" fill="url(#cell)"/><rect x="68" y="256" width="13" height="1" fill="#7a4a28" /><rect x="74" y="250" width="1" height="13" fill="#7a4a28" /><path d="M75 259 H78 V257 L82 260.5 L78 264 V262 H75 Z" fill="#4a8cf0" stroke="#2262d8" stroke-width=".7"/><rect x="51" y="269" width="9" height="9" fill="#808080" /><rect x="52" y="270" width="7" height="7" fill="#fff" /><rect x="53" y="273" width="5" height="1" fill="#000" /><rect x="55" y="271" width="1" height="5" fill="#000" /><rect x="61" y="273" width="1" height="1" fill="#808080" /><rect x="63" y="273" width="1" height="1" fill="#808080" /><rect x="65" y="273" width="1" height="1" fill="#808080" /><rect x="69.5" y="268.5" width="10" height="10" fill="#ecd0a0" stroke="#c87830"/><rect x="70" y="269" width="4" height="4" fill="url(#cell)"/><rect x="75" y="269" width="4" height="4" fill="url(#cell)"/><rect x="70" y="274" width="4" height="4" fill="url(#cell)"/><rect x="75" y="274" width="4" height="4" fill="url(#cell)"/><rect x="68" y="273" width="13" height="1" fill="#7a4a28" /><rect x="74" y="267" width="1" height="13" fill="#7a4a28" /><path d="M75 276 H78 V274 L82 277.5 L78 281 V279 H75 Z" fill="#4a8cf0" stroke="#2262d8" stroke-width=".7"/><rect x="51" y="286" width="9" height="9" fill="#808080" /><rect x="52" y="287" width="7" height="7" fill="#fff" /><rect x="53" y="290" width="5" height="1" fill="#000" /><rect x="55" y="288" width="1" height="5" fill="#000" /><rect x="61" y="290" width="1" height="1" fill="#808080" /><rect x="63" y="290" width="1" height="1" fill="#808080" /><rect x="65" y="290" width="1" height="1" fill="#808080" /><rect x="69.5" y="285.5" width="10" height="10" fill="#ecd0a0" stroke="#c87830"/><rect x="70" y="286" width="4" height="4" fill="url(#cell)"/><rect x="75" y="286" width="4" height="4" fill="url(#cell)"/><rect x="70" y="291" width="4" height="4" fill="url(#cell)"/><rect x="75" y="291" width="4" height="4" fill="url(#cell)"/><rect x="68" y="290" width="13" height="1" fill="#7a4a28" /><rect x="74" y="284" width="1" height="13" fill="#7a4a28" /><path d="M75 293 H78 V291 L82 294.5 L78 298 V296 H75 Z" fill="#4a8cf0" stroke="#2262d8" stroke-width=".7"/><rect x="51" y="303" width="9" height="9" fill="#808080" /><rect x="52" y="304" width="7" height="7" fill="#fff" /><rect x="53" y="307" width="5" height="1" fill="#000" /><rect x="55" y="305" width="1" height="5" fill="#000" /><rect x="61" y="307" width="1" height="1" fill="#808080" /><rect x="63" y="307" width="1" height="1" fill="#808080" /><rect x="65" y="307" width="1" height="1" fill="#808080" /><rect x="69.5" y="302.5" width="10" height="10" fill="#ecd0a0" stroke="#c87830"/><rect x="70" y="303" width="4" height="4" fill="url(#cell)"/><rect x="75" y="303" width="4" height="4" fill="url(#cell)"/><rect x="70" y="308" width="4" height="4" fill="url(#cell)"/><rect x="75" y="308" width="4" height="4" fill="url(#cell)"/><rect x="68" y="307" width="13" height="1" fill="#7a4a28" /><rect x="74" y="301" width="1" height="13" fill="#7a4a28" /><path d="M75 310 H78 V308 L82 311.5 L78 315 V313 H75 Z" fill="#4a8cf0" stroke="#2262d8" stroke-width=".7"/><rect x="51" y="320" width="9" height="9" fill="#808080" /><rect x="52" y="321" width="7" height="7" fill="#fff" /><rect x="53" y="324" width="5" height="1" fill="#000" /><rect x="55" y="322" width="1" height="5" fill="#000" /><rect x="61" y="324" width="1" height="1" fill="#808080" /><rect x="63" y="324" width="1" height="1" fill="#808080" /><rect x="65" y="324" width="1" height="1" fill="#808080" /><rect x="69.5" y="319.5" width="10" height="10" fill="#ecd0a0" stroke="#c87830"/><rect x="70" y="320" width="4" height="4" fill="url(#cell)"/><rect x="75" y="320" width="4" height="4" fill="url(#cell)"/><rect x="70" y="325" width="4" height="4" fill="url(#cell)"/><rect x="75" y="325" width="4" height="4" fill="url(#cell)"/><rect x="68" y="324" width="13" height="1" fill="#7a4a28" /><rect x="74" y="318" width="1" height="13" fill="#7a4a28" /><path d="M75 327 H78 V325 L82 328.5 L78 332 V330 H75 Z" fill="#4a8cf0" stroke="#2262d8" stroke-width=".7"/><rect x="51" y="337" width="9" height="9" fill="#808080" /><rect x="52" y="338" width="7" height="7" fill="#fff" /><rect x="53" y="341" width="5" height="1" fill="#000" /><rect x="55" y="339" width="1" height="5" fill="#000" /><rect x="61" y="341" width="1" height="1" fill="#808080" /><rect x="63" y="341" width="1" height="1" fill="#808080" /><rect x="65" y="341" width="1" height="1" fill="#808080" /><rect x="69.5" y="336.5" width="10" height="10" fill="#ecd0a0" stroke="#c87830"/><rect x="70" y="337" width="4" height="4" fill="url(#cell)"/><rect x="75" y="337" width="4" height="4" fill="url(#cell)"/><rect x="70" y="342" width="4" height="4" fill="url(#cell)"/><rect x="75" y="342" width="4" height="4" fill="url(#cell)"/><rect x="68" y="341" width="13" height="1" fill="#7a4a28" /><rect x="74" y="335" width="1" height="13" fill="#7a4a28" /><path d="M75 344 H78 V342 L82 345.5 L78 349 V347 H75 Z" fill="#4a8cf0" stroke="#2262d8" stroke-width=".7"/><rect x="51" y="354" width="9" height="9" fill="#808080" /><rect x="52" y="355" width="7" height="7" fill="#fff" /><rect x="53" y="358" width="5" height="1" fill="#000" /><rect x="55" y="356" width="1" height="5" fill="#000" /><rect x="61" y="358" width="1" height="1" fill="#808080" /><rect x="63" y="358" width="1" height="1" fill="#808080" /><rect x="65" y="358" width="1" height="1" fill="#808080" /><rect x="74.5" y="351.5" width="7" height="7" fill="#ecd0a0" stroke="#c87830"/><rect x="75" y="352" width="3" height="3" fill="url(#cell)"/><rect x="79" y="352" width="3" height="3" fill="url(#cell)"/><rect x="75" y="356" width="3" height="3" fill="url(#cell)"/><rect x="79" y="356" width="3" height="3" fill="url(#cell)"/><rect x="73" y="355" width="10" height="1" fill="#7a4a28" /><rect x="78" y="350" width="1" height="10" fill="#7a4a28" /><rect x="67.5" y="356.5" width="8" height="8" fill="#ecd0a0" stroke="#c87830"/><rect x="68" y="357" width="3" height="3" fill="url(#cell)"/><rect x="72" y="357" width="3" height="3" fill="url(#cell)"/><rect x="68" y="361" width="3" height="3" fill="url(#cell)"/><rect x="72" y="361" width="3" height="3" fill="url(#cell)"/><rect x="66" y="360" width="11" height="1" fill="#7a4a28" /><rect x="71" y="355" width="1" height="11" fill="#7a4a28" /><path d="M75 361 H78 V359 L82 362.5 L78 366 V364 H75 Z" fill="#4a8cf0" stroke="#2262d8" stroke-width=".7"/><rect x="51" y="371" width="9" height="9" fill="#808080" /><rect x="52" y="372" width="7" height="7" fill="#fff" /><rect x="53" y="375" width="5" height="1" fill="#000" /><rect x="55" y="373" width="1" height="5" fill="#000" /><rect x="61" y="375" width="1" height="1" fill="#808080" /><rect x="63" y="375" width="1" height="1" fill="#808080" /><rect x="65" y="375" width="1" height="1" fill="#808080" /><rect x="74.5" y="368.5" width="7" height="7" fill="#ecd0a0" stroke="#c87830"/><rect x="75" y="369" width="3" height="3" fill="url(#cell)"/><rect x="79" y="369" width="3" height="3" fill="url(#cell)"/><rect x="75" y="373" width="3" height="3" fill="url(#cell)"/><rect x="79" y="373" width="3" height="3" fill="url(#cell)"/><rect x="73" y="372" width="10" height="1" fill="#7a4a28" /><rect x="78" y="367" width="1" height="10" fill="#7a4a28" /><rect x="67.5" y="373.5" width="8" height="8" fill="#ecd0a0" stroke="#c87830"/><rect x="68" y="374" width="3" height="3" fill="url(#cell)"/><rect x="72" y="374" width="3" height="3" fill="url(#cell)"/><rect x="68" y="378" width="3" height="3" fill="url(#cell)"/><rect x="72" y="378" width="3" height="3" fill="url(#cell)"/><rect x="66" y="377" width="11" height="1" fill="#7a4a28" /><rect x="71" y="372" width="1" height="11" fill="#7a4a28" /><path d="M75 378 H78 V376 L82 379.5 L78 383 V381 H75 Z" fill="#4a8cf0" stroke="#2262d8" stroke-width=".7"/><rect x="51" y="388" width="9" height="9" fill="#808080" /><rect x="52" y="389" width="7" height="7" fill="#fff" /><rect x="53" y="392" width="5" height="1" fill="#000" /><rect x="55" y="390" width="1" height="5" fill="#000" /><rect x="61" y="392" width="1" height="1" fill="#808080" /><rect x="63" y="392" width="1" height="1" fill="#808080" /><rect x="65" y="392" width="1" height="1" fill="#808080" /><rect x="69.5" y="387.5" width="10" height="10" fill="#ecd0a0" stroke="#c87830"/><rect x="70" y="388" width="4" height="4" fill="url(#cell)"/><rect x="75" y="388" width="4" height="4" fill="url(#cell)"/><rect x="70" y="393" width="4" height="4" fill="url(#cell)"/><rect x="75" y="393" width="4" height="4" fill="url(#cell)"/><rect x="68" y="392" width="13" height="1" fill="#7a4a28" /><rect x="74" y="386" width="1" height="13" fill="#7a4a28" /><path d="M75 395 H78 V393 L82 396.5 L78 400 V398 H75 Z" fill="#4a8cf0" stroke="#2262d8" stroke-width=".7"/><rect x="51" y="405" width="9" height="9" fill="#808080" /><rect x="52" y="406" width="7" height="7" fill="#fff" /><rect x="53" y="409" width="5" height="1" fill="#000" /><rect x="55" y="407" width="1" height="5" fill="#000" /><rect x="61" y="409" width="1" height="1" fill="#808080" /><rect x="63" y="409" width="1" height="1" fill="#808080" /><rect x="65" y="409" width="1" height="1" fill="#808080" /><rect x="69.5" y="404.5" width="10" height="10" fill="#ecd0a0" stroke="#c87830"/><rect x="70" y="405" width="4" height="4" fill="url(#cell)"/><rect x="75" y="405" width="4" height="4" fill="url(#cell)"/><rect x="70" y="410" width="4" height="4" fill="url(#cell)"/><rect x="75" y="410" width="4" height="4" fill="url(#cell)"/><rect x="68" y="409" width="13" height="1" fill="#7a4a28" /><rect x="74" y="403" width="1" height="13" fill="#7a4a28" /><path d="M75 412 H78 V410 L82 413.5 L78 417 V415 H75 Z" fill="#4a8cf0" stroke="#2262d8" stroke-width=".7"/><rect x="51" y="422" width="9" height="9" fill="#808080" /><rect x="52" y="423" width="7" height="7" fill="#fff" /><rect x="53" y="426" width="5" height="1" fill="#000" /><rect x="55" y="424" width="1" height="5" fill="#000" /><rect x="61" y="426" width="1" height="1" fill="#808080" /><rect x="63" y="426" width="1" height="1" fill="#808080" /><rect x="65" y="426" width="1" height="1" fill="#808080" /><rect x="69.5" y="421.5" width="10" height="10" fill="#ecd0a0" stroke="#c87830"/><rect x="70" y="422" width="4" height="4" fill="url(#cell)"/><rect x="75" y="422" width="4" height="4" fill="url(#cell)"/><rect x="70" y="427" width="4" height="4" fill="url(#cell)"/><rect x="75" y="427" width="4" height="4" fill="url(#cell)"/><rect x="68" y="426" width="13" height="1" fill="#7a4a28" /><rect x="74" y="420" width="1" height="13" fill="#7a4a28" /><path d="M75 429 H78 V427 L82 430.5 L78 434 V432 H75 Z" fill="#4a8cf0" stroke="#2262d8" stroke-width=".7"/><rect x="51" y="439" width="9" height="9" fill="#808080" /><rect x="52" y="440" width="7" height="7" fill="#fff" /><rect x="53" y="443" width="5" height="1" fill="#000" /><rect x="55" y="441" width="1" height="5" fill="#000" /><rect x="61" y="443" width="1" height="1" fill="#808080" /><rect x="63" y="443" width="1" height="1" fill="#808080" /><rect x="65" y="443" width="1" height="1" fill="#808080" /><rect x="69.5" y="438.5" width="10" height="10" fill="#ecd0a0" stroke="#c87830"/><rect x="70" y="439" width="4" height="4" fill="url(#cell)"/><rect x="75" y="439" width="4" height="4" fill="url(#cell)"/><rect x="70" y="444" width="4" height="4" fill="url(#cell)"/><rect x="75" y="444" width="4" height="4" fill="url(#cell)"/><rect x="68" y="443" width="13" height="1" fill="#7a4a28" /><rect x="74" y="437" width="1" height="13" fill="#7a4a28" /><path d="M75 446 H78 V444 L82 447.5 L78 451 V449 H75 Z" fill="#4a8cf0" stroke="#2262d8" stroke-width=".7"/><rect x="51" y="456" width="9" height="9" fill="#808080" /><rect x="52" y="457" width="7" height="7" fill="#fff" /><rect x="53" y="460" width="5" height="1" fill="#000" /><rect x="55" y="458" width="1" height="5" fill="#000" /><rect x="61" y="460" width="1" height="1" fill="#808080" /><rect x="63" y="460" width="1" height="1" fill="#808080" /><rect x="65" y="460" width="1" height="1" fill="#808080" /><rect x="69.5" y="455.5" width="10" height="10" fill="#ecd0a0" stroke="#c87830"/><rect x="70" y="456" width="4" height="4" fill="url(#cell)"/><rect x="75" y="456" width="4" height="4" fill="url(#cell)"/><rect x="70" y="461" width="4" height="4" fill="url(#cell)"/><rect x="75" y="461" width="4" height="4" fill="url(#cell)"/><rect x="68" y="460" width="13" height="1" fill="#7a4a28" /><rect x="74" y="454" width="1" height="13" fill="#7a4a28" /><path d="M75 463 H78 V461 L82 464.5 L78 468 V466 H75 Z" fill="#4a8cf0" stroke="#2262d8" stroke-width=".7"/></svg>
<div style="position:absolute;left:48.09px;top:128px;font:11px/20px 'Liberation Sans', sans-serif;white-space:pre;color:#000;-webkit-text-stroke:0.1px #000;transform:scaleX(0.9140);transform-origin:0 0;">HDB (HANAUSER)</div>
<div style="position:absolute;left:67.06px;top:145px;font:11px/20px 'Liberation Sans', sans-serif;white-space:pre;color:#000;-webkit-text-stroke:0.1px #000;transform:scaleX(0.9429);transform-origin:0 0;">Backup</div>
<div style="position:absolute;left:66.97px;top:162px;font:11px/20px 'Liberation Sans', sans-serif;white-space:pre;color:#000;-webkit-text-stroke:0.1px #000;transform:scaleX(1.0278);transform-origin:0 0;">Catalog</div>
<div style="position:absolute;left:66.97px;top:179px;font:11px/20px 'Liberation Sans', sans-serif;white-space:pre;color:#000;-webkit-text-stroke:0.1px #000;transform:scaleX(1.0263);transform-origin:0 0;">Content</div>
<div style="position:absolute;left:87.00px;top:196px;font:11px/20px 'Liberation Sans', sans-serif;white-space:pre;color:#000;-webkit-text-stroke:0.1px #000;transform:scaleX(0.9286);transform-origin:0 0;">_Dips</div>
<div style="position:absolute;left:87.00px;top:213px;font:11px/20px 'Liberation Sans', sans-serif;white-space:pre;color:#000;-webkit-text-stroke:0.1px #000;transform:scaleX(0.9326);transform-origin:0 0;">0ZSales_Package</div>
<div style="position:absolute;left:87.07px;top:230px;font:11px/20px 'Liberation Sans', sans-serif;white-space:pre;color:#fff;-webkit-text-stroke:0.1px #fff;transform:scaleX(0.9300);transform-origin:0 0;-webkit-text-stroke:0.15px #fff;">1mypackage</div>
<div style="position:absolute;left:86.07px;top:247px;font:11px/20px 'Liberation Sans', sans-serif;white-space:pre;color:#000;-webkit-text-stroke:0.1px #000;transform:scaleX(0.9300);transform-origin:0 0;">B1_package</div>
<div style="position:absolute;left:86.07px;top:264px;font:11px/20px 'Liberation Sans', sans-serif;white-space:pre;color:#000;-webkit-text-stroke:0.1px #000;transform:scaleX(0.9300);transform-origin:0 0;">B1_T</div>
<div style="position:absolute;left:86.07px;top:281px;font:11px/20px 'Liberation Sans', sans-serif;white-space:pre;color:#000;-webkit-text-stroke:0.1px #000;transform:scaleX(0.9300);transform-origin:0 0;">B1_T</div>
<div style="position:absolute;left:86.07px;top:298px;font:11px/20px 'Liberation Sans', sans-serif;white-space:pre;color:#000;-webkit-text-stroke:0.1px #000;transform:scaleX(0.9300);transform-origin:0 0;">BHASKAR</div>
<div style="position:absolute;left:86.07px;top:315px;font:11px/20px 'Liberation Sans', sans-serif;white-space:pre;color:#000;-webkit-text-stroke:0.1px #000;transform:scaleX(0.9300);transform-origin:0 0;">Chitr</div>
<div style="position:absolute;left:86.07px;top:332px;font:11px/20px 'Liberation Sans', sans-serif;white-space:pre;color:#000;-webkit-text-stroke:0.1px #000;transform:scaleX(0.9300);transform-origin:0 0;">Elohim</div>
<div style="position:absolute;left:87.00px;top:349px;font:11px/20px 'Liberation Sans', sans-serif;white-space:pre;color:#000;-webkit-text-stroke:0.1px #000;transform:scaleX(0.9300);transform-origin:0 0;">elohim1</div>
<div style="position:absolute;left:87.00px;top:366px;font:11px/20px 'Liberation Sans', sans-serif;white-space:pre;color:#000;-webkit-text-stroke:0.1px #000;transform:scaleX(0.9300);transform-origin:0 0;">elohim2</div>
<div style="position:absolute;left:86.07px;top:383px;font:11px/20px 'Liberation Sans', sans-serif;white-space:pre;color:#000;-webkit-text-stroke:0.1px #000;transform:scaleX(0.9300);transform-origin:0 0;">HANA_DEMO</div>
<div style="position:absolute;left:86.07px;top:400px;font:11px/20px 'Liberation Sans', sans-serif;white-space:pre;color:#000;-webkit-text-stroke:0.1px #000;transform:scaleX(0.9300);transform-origin:0 0;">Hana_Test</div>
<div style="position:absolute;left:86.07px;top:417px;font:11px/20px 'Liberation Sans', sans-serif;white-space:pre;color:#000;-webkit-text-stroke:0.1px #000;transform:scaleX(0.9300);transform-origin:0 0;">HDB</div>
<div style="position:absolute;left:86.07px;top:434px;font:11px/20px 'Liberation Sans', sans-serif;white-space:pre;color:#000;-webkit-text-stroke:0.1px #000;transform:scaleX(0.9300);transform-origin:0 0;">P1_package</div>
<div style="position:absolute;left:86.07px;top:451px;font:11px/20px 'Liberation Sans', sans-serif;white-space:pre;color:#000;-webkit-text-stroke:0.1px #000;transform:scaleX(0.9300);transform-origin:0 0;">PKG_NEW</div>
<div style="position:absolute;left:5px;top:463px;width:195px;height:18px;background:#fff"></div>
<svg style="position:absolute;left:0;top:0" width="604" height="517" shape-rendering="crispEdges"><rect x="200" y="129" width="16" height="334" fill="#e8e6e0" /><rect x="200" y="129" width="16" height="16" fill="#404040" /><rect x="200" y="129" width="15" height="15" fill="#d4d0c8" /><rect x="201" y="130" width="14" height="14" fill="#808080" /><rect x="201" y="130" width="13" height="13" fill="#fff" /><rect x="202" y="131" width="12" height="12" fill="#d4d0c8" /><polygon points="203.5,139 211.5,139 207.5,135" fill="#000"/><rect x="200" y="145" width="16" height="318" fill="#404040" /><rect x="200" y="145" width="15" height="317" fill="#d4d0c8" /><rect x="201" y="146" width="14" height="316" fill="#808080" /><rect x="201" y="146" width="13" height="315" fill="#fff" /><rect x="202" y="147" width="12" height="314" fill="#d4d0c8" /><rect x="6" y="463" width="194" height="16" fill="#e8e6e0" /><rect x="6" y="463" width="16" height="16" fill="#404040" /><rect x="6" y="463" width="15" height="15" fill="#d4d0c8" /><rect x="7" y="464" width="14" height="14" fill="#808080" /><rect x="7" y="464" width="13" height="13" fill="#fff" /><rect x="8" y="465" width="12" height="12" fill="#d4d0c8" /><polygon points="15,466.5 15,474.5 11,470.5" fill="#000"/><rect x="22" y="463" width="178" height="16" fill="#404040" /><rect x="22" y="463" width="177" height="15" fill="#d4d0c8" /><rect x="23" y="464" width="176" height="14" fill="#808080" /><rect x="23" y="464" width="175" height="13" fill="#fff" /><rect x="24" y="465" width="174" height="12" fill="#d4d0c8" /><rect x="6" y="479" width="210" height="1" fill="#9a9aaa" /></svg>
<div style="position:absolute;left:110px;top:237px;width:199px;height:280px;background:#d4d0c8;box-shadow:inset 1px 1px 0 #e8e4dc, inset 2px 2px 0 #fff, inset -1px 0 0 #404040, inset -2px 0 0 #808080"></div>
<div style="position:absolute;left:113px;top:260px;width:191px;height:1px;background:#808080"></div>
<div style="position:absolute;left:113px;top:261px;width:191px;height:1px;background:#fff"></div>
<div style="position:absolute;left:113px;top:286px;width:191px;height:1px;background:#808080"></div>
<div style="position:absolute;left:113px;top:287px;width:191px;height:1px;background:#fff"></div>
<div style="position:absolute;left:113px;top:335px;width:191px;height:1px;background:#808080"></div>
<div style="position:absolute;left:113px;top:336px;width:191px;height:1px;background:#fff"></div>
<div style="position:absolute;left:113px;top:441px;width:191px;height:1px;background:#808080"></div>
<div style="position:absolute;left:113px;top:442px;width:191px;height:1px;background:#fff"></div>
<div style="position:absolute;left:113px;top:266px;width:190px;height:17px;background:#0a246a"></div>
<div style="position:absolute;left:134.00px;top:238px;font:11px/20px 'Liberation Sans', sans-serif;white-space:pre;color:#000;-webkit-text-stroke:0.1px #000;">New</div>
<div style="position:absolute;left:134.00px;top:264px;font:11px/20px 'Liberation Sans', sans-serif;white-space:pre;color:#fff;-webkit-text-stroke:0.1px #fff;-webkit-text-stroke:0.15px #fff;">New</div>
<div style="position:absolute;left:134.00px;top:292px;font:11px/20px 'Liberation Sans', sans-serif;white-space:pre;color:#000;-webkit-text-stroke:0.1px #000;">Find</div>
<div style="position:absolute;left:254.93px;top:292px;font:11px/20px 'Liberation Sans', sans-serif;white-space:pre;color:#000;-webkit-text-stroke:0.1px #000;transform:scaleX(1.0690);transform-origin:0 0;">Ctrl+F</div>
<div style="position:absolute;left:134.00px;top:312px;font:11px/20px 'Liberation Sans', sans-serif;white-space:pre;color:#000;-webkit-text-stroke:0.1px #000;">Refresh</div>
<div style="position:absolute;left:255.00px;top:312px;font:11px/20px 'Liberation Sans', sans-serif;white-space:pre;color:#000;-webkit-text-stroke:0.1px #000;">F5</div>
<div style="position:absolute;left:135.00px;top:341px;font:11px/20px 'Liberation Sans', sans-serif;white-space:pre;color:#000;-webkit-text-stroke:0.1px #000;transform:scaleX(0.9899);transform-origin:0 0;">Auto Documentation</div>
<div style="position:absolute;left:135.00px;top:361px;font:11px/20px 'Liberation Sans', sans-serif;white-space:pre;color:#000;-webkit-text-stroke:0.1px #000;">Activate</div>
<div style="position:absolute;left:134.04px;top:381px;font:11px/20px 'Liberation Sans', sans-serif;white-space:pre;color:#000;-webkit-text-stroke:0.1px #000;transform:scaleX(0.9565);transform-origin:0 0;">Redeploy</div>
<div style="position:absolute;left:134.06px;top:399px;font:11px/20px 'Liberation Sans', sans-serif;white-space:pre;color:#000;-webkit-text-stroke:0.1px #000;transform:scaleX(0.9444);transform-origin:0 0;">Edit</div>
<div style="position:absolute;left:134.03px;top:418px;font:11px/20px 'Liberation Sans', sans-serif;white-space:pre;color:#000;-webkit-text-stroke:0.1px #000;transform:scaleX(0.9677);transform-origin:0 0;">Delete</div>
<div style="position:absolute;left:255.03px;top:418px;font:11px/20px 'Liberation Sans', sans-serif;white-space:pre;color:#000;-webkit-text-stroke:0.1px #000;transform:scaleX(0.9677);transform-origin:0 0;">Delete</div>
<div style="position:absolute;left:134.03px;top:445px;font:11px/20px 'Liberation Sans', sans-serif;white-space:pre;color:#000;-webkit-text-stroke:0.1px #000;transform:scaleX(0.9701);transform-origin:0 0;">Remove Filter</div>
<div style="position:absolute;left:133.96px;top:464px;font:11px/20px 'Liberation Sans', sans-serif;white-space:pre;color:#000;-webkit-text-stroke:0.1px #000;transform:scaleX(1.0417);transform-origin:0 0;">Filter Objects...</div>
<div style="position:absolute;left:135.00px;top:483px;font:11px/20px 'Liberation Sans', sans-serif;white-space:pre;color:#fff;-webkit-text-stroke:0.1px #fff;">Paste</div>
<div style="position:absolute;left:256.00px;top:483px;font:11px/20px 'Liberation Sans', sans-serif;white-space:pre;color:#fff;-webkit-text-stroke:0.1px #fff;">Ctrl+V</div>
<div style="position:absolute;left:134.00px;top:482px;font:11px/20px 'Liberation Sans', sans-serif;white-space:pre;color:#808080;-webkit-text-stroke:0.1px #808080;">Paste</div>
<div style="position:absolute;left:255.00px;top:482px;font:11px/20px 'Liberation Sans', sans-serif;white-space:pre;color:#808080;-webkit-text-stroke:0.1px #808080;">Ctrl+V</div>
<div style="position:absolute;left:134.00px;top:499px;font:11px/20px 'Liberation Sans', sans-serif;white-space:pre;color:#000;-webkit-text-stroke:0.1px #000;">Refactor</div>
<svg style="position:absolute;left:0;top:0" width="604" height="517"><polygon points="296,244 296,252 300,248" fill="#000"/><polygon points="297,270 297,278 301,274" fill="#fff"/><polygon points="296,451 296,459 300,455" fill="#000"/><polygon points="296,505 296,513 300,509" fill="#000"/><rect x="116.5" y="295.5" width="6" height="3" fill="#fff" stroke="#3060b0"/><rect x="116.5" y="301.5" width="6" height="3" fill="#fff" stroke="#3060b0"/><rect x="116.5" y="305.5" width="6" height="3" fill="#fff" stroke="#3060b0"/><circle cx="123" cy="302" r="4" fill="#d0ecff" stroke="#4080c0" stroke-width="1.2"/><path d="M126 305 L130 308.5" stroke="#e0a020" stroke-width="2.2"/><path d="M119.5 315.5 H126.5 L129.5 318.5 V328.5 H119.5 Z" fill="#edf2fc" stroke="#b4ac80"/><path d="M126.5 315.5 V318.5 H129.5" fill="#e8dca8" stroke="#b4ac80"/><path d="M117.5 323 Q117.5 319.5 121.5 319.5" stroke="#e0b020" stroke-width="2.2" fill="none"/><path d="M121 316.5 L124.5 319.5 L121 322.5 Z" fill="#e8b820"/><path d="M123.5 321 Q123.5 325 119.5 325" stroke="#e0b020" stroke-width="2.2" fill="none"/><path d="M120 322 L116.5 325 L120 328 Z" fill="#e8b820"/><rect x="117.5" y="345.5" width="10" height="12" fill="#fff" stroke="#5090e0"/><rect x="119" y="348" width="7" height="1" fill="#a0a0a0" /><rect x="119" y="350" width="7" height="1" fill="#a0a0a0" /><rect x="119" y="352" width="7" height="1" fill="#a0a0a0" /><rect x="119" y="354" width="7" height="1" fill="#a0a0a0" /><circle cx="122.5" cy="370.5" r="6.5" fill="#30a030"/><path d="M119 369 H122 V366.5 L126 370.5 L122 374.5 V372 H119 Z" fill="#fff"/><circle cx="122.5" cy="390.5" r="6.5" fill="#30a030"/><path d="M119 392 Q120 387 125 388.5 L124 386 L127.5 390 L123 392 L124 390 Q121 389.5 119 392 Z" fill="#fff"/><path d="M118 424 L127 433 M127 424 L118 433" stroke="#e8303c" stroke-width="3.2" stroke-linecap="round"/><path d="M115 469.5 H121" stroke="#3a6aa8" stroke-width="1.2"/><path d="M119.5 467.0 L123 469.5 L119.5 472.0 Z" fill="#404860"/><rect x="124" y="467.0" width="1" height="5" fill="#304068" /><path d="M115 479.5 H121" stroke="#3a6aa8" stroke-width="1.2"/><path d="M119.5 477.0 L123 479.5 L119.5 482.0 Z" fill="#404860"/><rect x="124" y="477.0" width="1" height="5" fill="#304068" /><path d="M119 473.5 H126 V471.5 L131 474.8 L126 478 V476 H119 Z" fill="#f8d448" stroke="#b88010" stroke-width=".9"/></svg>
<div style="position:absolute;left:304px;top:263px;width:156px;height:148px;background:#d4d0c8;box-shadow:inset 1px 1px 0 #e8e4dc, inset 2px 2px 0 #fff, inset -1px -1px 0 #404040, inset -2px -2px 0 #808080"></div>
<div style="position:absolute;left:328.98px;top:266px;font:11px/20px 'Liberation Sans', sans-serif;white-space:pre;color:#000;-webkit-text-stroke:0.1px #000;transform:scaleX(1.0200);transform-origin:0 0;">Package...</div>
<div style="position:absolute;left:330.00px;top:286px;font:11px/20px 'Liberation Sans', sans-serif;white-space:pre;color:#000;-webkit-text-stroke:0.1px #000;transform:scaleX(1.0395);transform-origin:0 0;">Attribute View...</div>
<div style="position:absolute;left:330.00px;top:306px;font:11px/20px 'Liberation Sans', sans-serif;white-space:pre;color:#000;-webkit-text-stroke:0.1px #000;transform:scaleX(1.0137);transform-origin:0 0;">Analytic View...</div>
<div style="position:absolute;left:329.00px;top:326px;font:11px/20px 'Liberation Sans', sans-serif;white-space:pre;color:#000;-webkit-text-stroke:0.1px #000;">Calculation View...</div>
<div style="position:absolute;left:330.00px;top:346px;font:11px/20px 'Liberation Sans', sans-serif;white-space:pre;color:#000;-webkit-text-stroke:0.1px #000;">Analytic Privilege...</div>
<div style="position:absolute;left:328.97px;top:366px;font:11px/20px 'Liberation Sans', sans-serif;white-space:pre;color:#000;-webkit-text-stroke:0.1px #000;transform:scaleX(1.0345);transform-origin:0 0;">Procedure...</div>
<div style="position:absolute;left:329.03px;top:386px;font:11px/20px 'Liberation Sans', sans-serif;white-space:pre;color:#000;-webkit-text-stroke:0.1px #000;transform:scaleX(0.9714);transform-origin:0 0;">Decision Table</div>
<svg style="position:absolute;left:0;top:0" width="604" height="517"><rect x="310.5" y="270.5" width="11" height="11" fill="#ecd0a0" stroke="#c87830"/><rect x="311" y="271" width="5" height="5" fill="url(#cell)" /><rect x="317" y="271" width="4" height="5" fill="url(#cell)" /><rect x="311" y="277" width="5" height="4" fill="url(#cell)" /><rect x="317" y="277" width="4" height="4" fill="url(#cell)" /><rect x="309" y="276" width="14" height="1" fill="#7a4a28" /><rect x="316" y="269" width="1" height="14" fill="#7a4a28" /><path d="M309 293 L315.5 289 V296 L309 299.5 Z" fill="#90c4f0"/><path d="M311.5 295.5 L318.5 291 V299 L311.5 302 Z" fill="#84b8ec"/><path d="M314.5 297.5 L322 293 V301 L314.5 303.5 Z" fill="#80b4ea"/><rect x="311" y="296" width="1" height="6" fill="#eef6ff" /><rect x="314" y="298" width="1" height="5" fill="#eef6ff" /><path d="M310 313 L316 310 L322 313 L316 316 Z" fill="#fcd050"/><path d="M310 313 V320 L316 323 V316 Z" fill="#f07020"/><path d="M322 313 V320 L316 323 V316 Z" fill="#e05010"/><rect x="314.5" y="328.5" width="9" height="12" rx="1" fill="#dceaf8" stroke="#3a64b8"/><rect x="316.5" y="330.5" width="5" height="3" fill="#fff" stroke="#6a90c8"/><rect x="318" y="335" width="1" height="1" fill="#20a020" /><rect x="320" y="335" width="1" height="1" fill="#e02020" /><rect x="318" y="337" width="1" height="1" fill="#606060" /><rect x="320" y="337" width="1" height="1" fill="#606060" /><rect x="308" y="335" width="9" height="9" fill="#fff" /><rect x="309" y="336" width="3" height="3" fill="#3a8ad8" /><rect x="313" y="336" width="3" height="3" fill="#3a8ad8" /><rect x="309" y="340" width="3" height="3" fill="#3a8ad8" /><rect x="313" y="340" width="3" height="3" fill="#3a8ad8" /><rect x="310" y="356" width="3" height="6" fill="#e06030" /><rect x="313" y="353" width="3" height="9" fill="#30a040" /><rect x="316" y="355" width="2" height="7" fill="#2050b0" /><rect x="315.5" y="349.5" width="7" height="6" fill="#f8c060" stroke="#b07020"/><path d="M317 349.5 V347.5 A2 2 0 0 1 321 347.5 V349.5" stroke="#909090" fill="none"/><rect x="318.5" y="366.5" width="3" height="5" fill="#f0d040" stroke="#a08010"/><path d="M310.5 372 Q314 369.5 317.5 372 V380 Q314 382.5 310.5 380 Z" fill="#f4d030" stroke="#b09010"/><rect x="312" y="373" width="2" height="6" fill="#fff4a0" /><rect x="318.5" y="378.5" width="4" height="4" fill="#f0c830" stroke="#a08010"/><path d="M320.5 372 L324 375.5 L320.5 379 L317 375.5 Z" fill="#80b8f8" stroke="#3a70d0" stroke-width=".7"/><rect x="311" y="392" width="11" height="1" fill="#f0a060" /><rect x="311" y="395" width="11" height="1" fill="#f0a060" /><rect x="311.5" y="396.5" width="10" height="6" fill="#f0f6fc" stroke="#90a8c8"/><path d="M316.5 396.5 L319 399.3 L316.5 402 L314 399.3 Z" fill="none" stroke="#2040b0" stroke-width=".9"/></svg>
<svg style="position:absolute;left:0;top:0" width="604" height="517"><defs><filter id="bl" x="-30%" y="-80%" width="160%" height="260%"><feGaussianBlur stdDeviation="2"/></filter></defs><ellipse cx="376" cy="360" rx="66" ry="12.2" fill="none" stroke="#707070" stroke-width="3.5" opacity=".55" filter="url(#bl)"/><ellipse cx="373" cy="357" rx="66" ry="12.2" fill="none" stroke="#fcc844" stroke-width="2.6"/></svg>
<div style="position:absolute;left:3px;top:0px;width:601px;height:1px;background:#000"></div>
<div style="position:absolute;left:3px;top:0px;width:1px;height:517px;background:#000"></div>
<div style="position:absolute;left:599px;top:0px;width:1px;height:517px;background:#000"></div>
<div style="position:absolute;left:3px;top:516px;width:597px;height:1px;background:#000"></div>
</body></html>
